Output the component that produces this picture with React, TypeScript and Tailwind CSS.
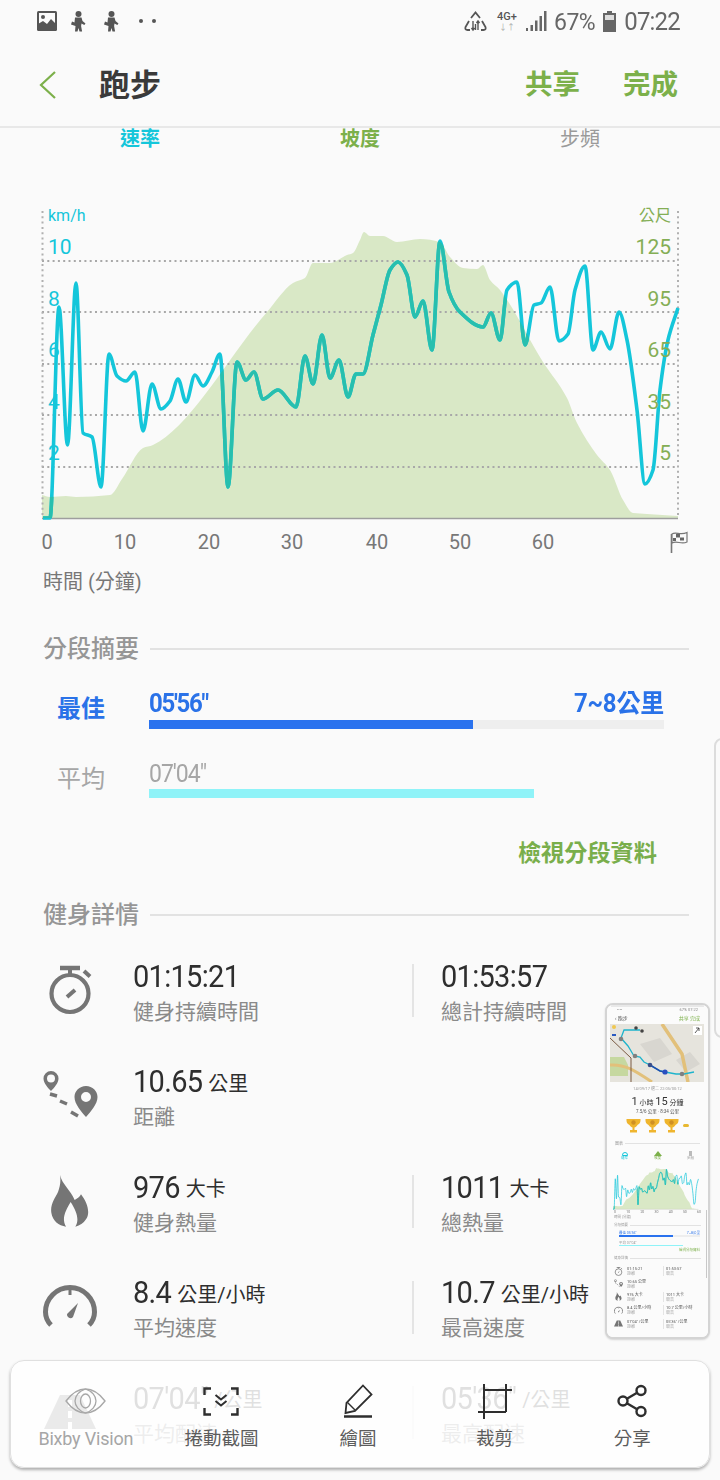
import React from "react";
import { Share2 } from "lucide-react";

type P = [number, number];

const speed: P[] = [[43,518],[50,518],[59,307],[67.5,445],[76,283],[83,433],[92,437],[101,487],[109,354],[117,376],[126,381],[135,372],[143,431],[152,384],[161,409],[170,401],[178,379],[186,402],[195,375],[203,386],[212,372],[220,354],[228,487],[237,362],[246,380],[254,372],[263,399],[278,390],[296,407],[305,356],[313,384],[322,335],[330,378],[339,360],[348,397],[356,374],[363,374],[373,335],[381,305],[390,270],[398,262],[407,275],[415,317],[423,301],[432,350],[440,241],[449,292],[460,312],[483,327],[491,313],[500,340],[507,290],[517,282],[525,345],[534,305],[541,303],[550,287],[559,341],[568,334],[575,290],[585,266],[593,350],[601,332],[610,349],[619,312],[627,340],[637,410],[645,484],[653,470],[660,390],[668,340],[678,308]];

const elevTop: P[] = [[42,495],[50,497],[66,496],[76,497],[110,495],[122,479],[143,448],[153,445],[267,312],[293,283],[305,278],[313,263],[330,263],[347,255],[353,253],[360,240],[364,232],[370,236],[383,236],[397,242],[420,239],[440,242],[450,257],[463,268],[477,269],[483,265],[490,280],[500,290],[543,362],[567,398],[577,423],[597,455],[610,470],[623,500],[633,513],[647,514],[678,516]];

function mono(pts: P[]) {
  const n = pts.length;
  const s: number[] = [];
  for (let i = 0; i < n - 1; i++) s.push((pts[i + 1][1] - pts[i][1]) / (pts[i + 1][0] - pts[i][0]));
  const m: number[] = [s[0]];
  for (let i = 1; i < n - 1; i++) {
    if (s[i - 1] * s[i] <= 0) m.push(0);
    else m.push((2 * s[i - 1] * s[i]) / (s[i - 1] + s[i]));
  }
  m.push(s[n - 2]);
  let d = `M${pts[0][0]} ${pts[0][1]}`;
  for (let i = 0; i < n - 1; i++) {
    const h = (pts[i + 1][0] - pts[i][0]) / 3;
    d += `C${pts[i][0] + h} ${pts[i][1] + m[i] * h} ${pts[i + 1][0] - h} ${pts[i + 1][1] - m[i + 1] * h} ${pts[i + 1][0]} ${pts[i + 1][1]}`;
  }
  return d;
}
const elevPath = mono(elevTop) + "L678 518L42 518Z";
const speedPath = mono(speed);

function Plot({ id, sw = 3.6, grid = true }: { id: string; sw?: number; grid?: boolean }) {
  return (
    <>
      <clipPath id={id}>
        <path d={elevPath} />
      </clipPath>
      <path d={elevPath} fill="#d9e8c6" />
      {grid &&
        [261, 312, 364, 415, 467].map((y) => (
          <line key={y} x1="42" x2="678" y1={y} y2={y} stroke="#a8a8a8" strokeWidth="2" strokeDasharray="2 3.3" />
        ))}
      {grid && <line x1="42.5" x2="42.5" y1="211" y2="518" stroke="#b0b0b0" strokeWidth="2" strokeDasharray="2 3.3" />}
      {grid && <line x1="678" x2="678" y1="211" y2="518" stroke="#b0b0b0" strokeWidth="2" strokeDasharray="2 3.3" />}
      <line x1="42" x2="678" y1="518.5" y2="518.5" stroke="#9e9e9e" strokeWidth="1.5" />
      <path d={speedPath} fill="none" stroke="#14c6da" strokeWidth={sw} strokeLinejoin="round" />
      <path d={speedPath} fill="none" stroke="#28bfae" strokeWidth={sw} strokeLinejoin="round" clipPath={`url(#${id})`} />
    </>
  );
}

function Figure() {
  return (
    <svg width="16" height="21" viewBox="0 0 16 21" fill="#555">
      <circle cx="8.500" cy="3" r="3" />
      <path d="M5 6.500h6.500l1 3.500 3 2.500-1.200 1.500-2.800-1.500-.4 2.500 1 5.500H9.500l-1-3.500-1 3.500H5l.5-5.500L1 13.500l1-3 2.500 1z" />
    </svg>
  );
}

function StatusBar() {
  return (
    <div className="h-[42px] flex items-center justify-between pl-[37px] pr-[40px] text-[#666]">
      <div className="flex items-center">
        <svg width="20" height="20" viewBox="0 0 20 20" className="mr-[13px]">
          <rect width="20" height="20" rx="1.500" fill="#555" />
          <rect x="2" y="2" width="16" height="16" fill="#fafafa" />
          <circle cx="6" cy="6" r="2" fill="#555" />
          <path d="M1 20v-7l5-3 4 3 4-5 5 5v7z" fill="#555" />
        </svg>
        <Figure />
        <div className="w-[17px]" />
        <Figure />
        <div className="ml-[20px] flex gap-[9px]">
          <span className="w-[4px] h-[4px] rounded-full bg-[#555]" />
          <span className="w-[4px] h-[4px] rounded-full bg-[#555]" />
        </div>
      </div>
      <div className="flex items-center">
        <svg width="23" height="21" viewBox="0 0 23 21" fill="none" stroke="#555" strokeWidth="1.800">
          <path d="M7 7l4.500-5.500L16 7M5 10l-3.500 6q-.8 3 2 3H6M18 10l3.500 6q.8 3-2 3H17" />
          <path d="M9 10v9M7.500 17l1.500 2 1.500-2M14 19v-9M12.500 12l1.500-2 1.500 2M11.500 13v6" strokeWidth="1.400" />
        </svg>
        <div className="ml-[9px] w-[22px] flex flex-col items-center leading-none">
          <span className="text-[11px] leading-[12px] font-medium text-[#555]">4G+</span>
          <span className="text-[8px] leading-[8px] text-[#aaa] mt-[1px]">↓↑</span>
        </div>
        <svg width="21" height="20" viewBox="0 0 21 20" className="ml-[8px]" fill="#666">
          <path d="M0 20v-3h2v3zM4.500 20v-6H7v6zM9 20V9.500h2.500V20zM13.500 20V5H16v15zM18 20V0h2.500v20z" />
        </svg>
        <span className="ml-[7px] text-[23px] leading-none tracking-[-0.5px] inline-block scale-y-[1.08]">67%</span>
        <svg width="13" height="21" viewBox="0 0 13 21" className="ml-[8px]">
          <path d="M4 0h5v2h4v19H0V2h4z" fill="#666" />
          <rect x="2" y="4" width="9" height="5" fill="#ddd" />
        </svg>
        <span className="ml-[8px] text-[24px] leading-none tracking-[-0.8px] inline-block scale-y-[1.08]">07:22</span>
      </div>
    </div>
  );
}

function AppBar() {
  return (
    <div className="h-[86px] border-b-2 border-[#e8e8e8] flex items-center pl-[38px] pr-[42px] pt-[2px]">
      <svg width="20" height="30" viewBox="0 0 20 30" fill="none" stroke="#7cb04a" strokeWidth="2.200">
        <path d="M17 2L3 15l14 13" />
      </svg>
      <span className="ml-[41px] text-[31px] leading-none font-bold text-[#3a3a3a] flex-1">跑步</span>
      <span className="text-[27.500px] leading-none font-bold text-[#7cb04a]">共享</span>
      <span className="ml-[43px] text-[27.500px] leading-none font-bold text-[#7cb04a]">完成</span>
    </div>
  );
}

const leftLabels: [string, string][] = [["10", "top-[85px]"], ["8", "top-[137px]"], ["6", "top-[188px]"], ["4", "top-[240px]"], ["2", "top-[291px]"]];
const rightLabels: [string, string][] = [["125", "top-[85px]"], ["95", "top-[137px]"], ["65", "top-[188px]"], ["35", "top-[240px]"], ["5", "top-[291px]"]];
const xLabels: [string, string][] = [["0", "left-[27px]"], ["10", "left-[105px]"], ["20", "left-[189px]"], ["30", "left-[272px]"], ["40", "left-[357px]"], ["50", "left-[440px]"], ["60", "left-[523px]"]];

function Chart() {
  return (
    <div className="relative h-[450px]">
      <svg width="720" height="450" viewBox="0 150 720 450" className="absolute inset-0">
        <Plot id="clip-main" />
      </svg>
      <span className="absolute left-[48px] top-[55px] text-[16px] leading-[22px] text-[#14c6da]">km/h</span>
      <span className="absolute right-[49px] top-[55px] text-[16px] leading-[22px] text-[#84ae55]">公尺</span>
      {leftLabels.map(([t, c]) => (
        <span key={t} className={`absolute left-[48px] ${c} text-[21px] leading-[24px] text-[#14c6da]`}>{t}</span>
      ))}
      {rightLabels.map(([t, c]) => (
        <span key={t} className={`absolute right-[49px] ${c} text-[21px] leading-[24px] text-[#84ae55]`}>{t}</span>
      ))}
      {xLabels.map(([t, c]) => (
        <span key={t} className={`absolute ${c} w-[40px] text-center top-[380px] text-[20px] leading-[24px] text-[#777]`}>{t}</span>
      ))}
      <svg width="18" height="22" viewBox="0 0 18 22" className="absolute left-[670px] top-[381px]">
        <path d="M1.500 22V3" stroke="#777" strokeWidth="1.600" />
        <path d="M2 3C6 0 10 5 17 1.500V11C11 14 7 9 2 12z" fill="#fafafa" stroke="#777" strokeWidth="1.200" />
        <path d="M6 3h4v3.500H6zM10 6.500h4v3h-4zM3 7h3v3H3z" fill="#666" />
      </svg>
      <span className="absolute left-[43px] top-[419px] text-[20px] leading-[26px] text-[#777]">時間 (分鐘)</span>
    </div>
  );
}

function SectionHead({ title }: { title: string }) {
  return (
    <div className="h-[34px] pl-[43px] pr-[31px] flex items-center gap-[11px]">
      <span className="text-[24px] leading-none font-medium text-[#969696]">{title}</span>
      <div className="flex-1 h-[2px] bg-[#e2e2e2]" />
    </div>
  );
}

function Splits() {
  return (
    <div className="pr-[56px]">
      <div className="flex">
        <span className="w-[149px] pl-[57px] pt-[5px] text-[24px] leading-[28px] font-bold text-[#2a72e8]">最佳</span>
        <div className="flex-1">
          <div className="flex justify-between h-[28px] items-center text-[#2a72e8] font-bold text-[24px] leading-none">
            <span className="tracking-[-1.300px] inline-block scale-y-[1.05]">05'56"</span>
            <span className="tracking-[-0.200px] inline-block scale-y-[1.05]">7~8公里</span>
          </div>
          <div className="mt-[2px] h-[9px] bg-[#eeeeee]">
            <div className="h-full w-[324px] bg-[#2a72ee]" />
          </div>
        </div>
      </div>
      <div className="flex mt-[30px]">
        <span className="w-[149px] pl-[57px] pt-[6px] text-[24px] leading-[28px] text-[#a6a6a6]">平均</span>
        <div className="flex-1">
          <div className="h-[28px] flex items-center text-[#a6a6a6] text-[23px] leading-none tracking-[-1px]"><span className="inline-block scale-y-[1.1]">07'04"</span></div>
          <div className="mt-[2px] h-[9px] w-[385px] bg-[#8ff3f8]" />
        </div>
      </div>
    </div>
  );
}

const StopwatchIcon = () => (
  <svg width="46" height="50" viewBox="0 0 46 50" fill="none" stroke="#757575">
    <circle cx="23" cy="28.500" r="18.500" strokeWidth="4.200" />
    <path d="M13 3h20" strokeWidth="4.500" />
    <path d="M23 3v6" strokeWidth="4" />
    <path d="M37 6l6 5.500" strokeWidth="4" />
    <path d="M20 32l8-7" strokeWidth="4" />
  </svg>
);
const PinIcon = () => (
  <svg width="56" height="50" viewBox="0 0 56 50">
    <path fillRule="evenodd" d="M9 0a7.500 7.500 0 0 1 7.500 7.500C16.500 12 12 17 9 20 6 17 1.500 12 1.500 7.500A7.500 7.500 0 0 1 9 0zm0 3.500a4 4 0 1 0 0 8 4 4 0 0 0 0-8z" fill="#757575" />
    <path fillRule="evenodd" d="M44 15c6.500 0 11.500 5 11.500 11 0 7-7 15-11.500 20-4.500-5-11.500-13-11.500-20 0-6 5-11 11.500-11zm0 6a5 5 0 1 0 0 10 5 5 0 0 0 0-10z" fill="#757575" />
    <path d="M8 23l7 2M18 30l7 3M29 41l7 4" stroke="#757575" strokeWidth="3.500" fill="none" />
  </svg>
);
const FlameIcon = () => (
  <svg width="40" height="54" viewBox="150 675 120 160">
    <path fillRule="evenodd" fill="#757575" d="M180 677C186 705 212 722 224 752C232 748 240 742 243 735C262 760 272 790 258 810C250 822 240 828 226 832C238 812 232 790 212 758C196 785 184 808 198 832C176 828 158 815 154 790C150 765 166 745 174 728C180 712 183 695 180 677Z" />
  </svg>
);
const GaugeIcon = () => (
  <svg width="54" height="44" viewBox="0 0 54 44" fill="none" stroke="#757575">
    <path d="M8 40C3 35 2.500 30 2.500 27a24.500 24.500 0 0 1 49 0c0 3-.5 8-5.500 13" strokeWidth="5" />
    <path d="M27 5v5" strokeWidth="3" />
    <path d="M24 29l11-11-5 14a3.500 3.500 0 0 1-6-3z" fill="#757575" stroke="none" />
  </svg>
);
const RoadIcon = () => (
  <svg width="52" height="34" viewBox="0 0 52 34">
    <path d="M16 0h20l16 34H0z" fill="#757575" />
    <path d="M24 5h4v7h-4zM24 16h4v7h-4zM24 27h4v7h-4z" fill="#fff" />
  </svg>
);

type Cell = { n: string; u?: string; l: string };
const rows: { icon: React.ReactNode; a: Cell; b?: Cell }[] = [
  { icon: <StopwatchIcon />, a: { n: "01:15:21", l: "健身持續時間" }, b: { n: "01:53:57", l: "總計持續時間" } },
  { icon: <PinIcon />, a: { n: "10.65", u: "公里", l: "距離" } },
  { icon: <FlameIcon />, a: { n: "976", u: "大卡", l: "健身熱量" }, b: { n: "1011", u: "大卡", l: "總熱量" } },
  { icon: <GaugeIcon />, a: { n: "8.4", u: "公里/小時", l: "平均速度" }, b: { n: "10.7", u: "公里/小時", l: "最高速度" } },
  { icon: <RoadIcon />, a: { n: "07'04\"", u: "/公里", l: "平均配速" }, b: { n: "05'36\"", u: "/公里", l: "最高配速" } },
];

function StatCell({ c }: { c: Cell }) {
  return (
    <div>
      <div className="h-[36px] flex items-center text-[#2e2e2e]">
        <span className="text-[29px] leading-none tracking-[-0.7px] inline-block scale-y-[1.08]">{c.n}</span>
        {c.u && <span className="ml-[6px] mt-[4px] text-[20px] leading-none">{c.u}</span>}
      </div>
      <div className="mt-[4px] h-[28px] flex items-center text-[21px] leading-none text-[#8a8a8a]">{c.l}</div>
    </div>
  );
}

function Stats() {
  return (
    <div>
      {rows.map((r, i) => (
        <div key={i} className="h-[105.5px] flex">
          <div className="w-[133px] pl-[14px] pr-[7px] h-[64px] flex items-center justify-center">{r.icon}</div>
          <div className="w-[279px]"><StatCell c={r.a} /></div>
          {r.b && (
            <>
              <div className="w-[2px] h-[53px] mt-[6px] bg-[#e4e4e4]" />
              <div className="ml-[27px]"><StatCell c={r.b} /></div>
            </>
          )}
        </div>
      ))}
    </div>
  );
}

function EyeIcon() {
  return (
    <svg width="41" height="26" viewBox="0 0 41 26" fill="none" stroke="#a8a8a8" strokeWidth="1.300">
      <path d="M1 13C7 5 14 1 20.500 1S34 5 40 13c-6 8-13.500 12-19.500 12S7 21 1 13z" />
      <path d="M20.500 1C14 3 10 8 10 13s4 10 10.500 12" />
      <path d="M20.500 1C27 3 31 8 31 13s-4 10-10.500 12" />
      <ellipse cx="20.500" cy="13" rx="5" ry="7" />
    </svg>
  );
}

function ScrollIcon() {
  return (
    <svg width="36" height="29" viewBox="0 0 36 29" fill="none" stroke="#2e2e2e" strokeWidth="2.400">
      <path d="M8 1.500H1.500V8M28 1.500h6.500V8M8 27.500H1.500V21M28 27.500h6.500V21" />
      <path d="M12.500 8l5.500 4.500L23.500 8M12.500 14l5.500 4.500 5.500-4.500" strokeWidth="2" />
    </svg>
  );
}
function PenIcon() {
  return (
    <svg width="30" height="34" viewBox="0 0 30 34" fill="none" stroke="#2e2e2e" strokeWidth="1.800">
      <path d="M20 1.500l8.500 9L12 27l-9.500 2 1-10z" />
      <path d="M4.500 18.500L12 26" strokeWidth="1.400" />
      <path d="M1 32.500h28" strokeWidth="2.500" />
    </svg>
  );
}
function CropIcon() {
  return (
    <svg width="34" height="35" viewBox="0 0 34 35" fill="none" stroke="#2e2e2e" strokeWidth="2">
      <path d="M6 6h22v22M6 0v28h22M0 28h6M28 0v6h6M6 28v7" />
    </svg>
  );
}

function ToolItem({ icon, label, cls, dim }: { icon: React.ReactNode; label: string; cls: string; dim?: boolean }) {
  return (
    <div className={`flex flex-col items-center ${cls}`}>
      <div className="h-[38px] flex items-center justify-center">{icon}</div>
      <span className={`mt-[6px] h-[26px] whitespace-nowrap leading-[26px] ${dim ? "text-[18px] tracking-[-0.200px] text-[#a6a6a6]" : "text-[18.500px] text-[#5c5c5c]"}`}>{label}</span>
    </div>
  );
}

function Toolbar() {
  return (
    <div className="absolute left-[10px] top-[1360px] w-[700px] h-[108px] rounded-[14px] bg-white/85 border border-[#e0e0e0] shadow-[0_2px_3px_rgba(0,0,0,0.3)] pt-[21px]">
      <div className="flex">
        <ToolItem cls="w-[150px]" icon={<EyeIcon />} label="Bixby Vision" dim />
        <ToolItem cls="w-[122px]" icon={<ScrollIcon />} label="捲動截圖" />
        <ToolItem cls="w-[152px]" icon={<PenIcon />} label="繪圖" />
        <ToolItem cls="w-[122px]" icon={<CropIcon />} label="裁剪" />
        <ToolItem cls="w-[154px]" icon={<Share2 size={36} strokeWidth={1.600} color="#2e2e2e" />} label="分享" />
      </div>
    </div>
  );
}

function MapMini() {
  return (
    <svg width="94" height="58" viewBox="0 0 94 58" className="block">
      <rect width="94" height="58" fill="#e6e4dd" />
      <path d="M30 20L50 14 62 30 44 38zM66 36l14-8 10 12-14 8z" fill="#d8d6d0" />
      <path d="M0 33h14l4 8v11H0z" fill="#c6d8a0" />
      <path d="M52 0L72 30 78 58" fill="none" stroke="#e2c07a" strokeWidth="3.500" />
      <path d="M0 41C15 40 24 46 42 58" fill="none" stroke="#e2c07a" strokeWidth="3" />
      <path d="M0 14L21 34V58" fill="none" stroke="#7a5a42" strokeWidth="1" />
      <path d="M30 6H14L11 14L18 22 24 32 30 33 34 38 40 41 50 47 55 48 66 50 74 50 84 48" fill="none" stroke="#1eb4cc" strokeWidth="1.300" />
      <path d="M40 41L50 47 55 48" fill="none" stroke="#1d4fae" strokeWidth="1.500" />
      <circle cx="11" cy="15" r="2.300" fill="#808080" />
      <circle cx="25" cy="32" r="2.300" fill="#808080" />
      <circle cx="40" cy="41" r="2.300" fill="#3a4f8a" />
      <circle cx="55" cy="48" r="2.600" fill="#2a4fc0" />
      <circle cx="72" cy="50" r="2.300" fill="#808080" />
      <circle cx="26" cy="4" r="1.800" fill="#444" />
      <circle cx="32" cy="7" r="1.800" fill="#444" />
      <circle cx="4" cy="3" r="2" fill="#f0c850" />
      <rect x="2" y="10" width="4" height="2" fill="#2a5ac0" />
      <rect x="83" y="2" width="9" height="9" fill="#fff" />
      <path d="M85 9l4-5M86 4h3v3" stroke="#333" strokeWidth=".8" fill="none" />
    </svg>
  );
}

function Trophy() {
  return (
    <svg width="15" height="15" viewBox="0 0 15 15">
      <path d="M0.500 1h14c.3 4-1.500 5-3 6-1 1.500-2 2.300-3 2.500V12H11v2.500H4V12h2.500V9.500c-1-.2-2-1-3-2.500-1.500-1-3.300-2-3-6z" fill="#efb52e" />
      <circle cx="7.500" cy="4.500" r="2.200" fill="#cf9024" />
    </svg>
  );
}

function MiniRow({ icon, a, b, h }: { icon: React.ReactNode; a: string; b?: string; h: string }) {
  return (
    <div className={`flex ${h} items-center`}>
      <div className="w-[17px] flex justify-center"><div className="w-[9px] h-[9px] flex items-center justify-center [&>svg]:w-full [&>svg]:h-full">{icon}</div></div>
      <div className="w-[36px] text-[4px] leading-[5px] text-[#555]">{a}<br /><span className="text-[#aaa]">距離</span></div>
      {b && <div className="text-[4px] leading-[5px] text-[#555] border-l border-[#e4e4e4] pl-[2px]">{b}<br /><span className="text-[#aaa]">最高</span></div>}
    </div>
  );
}

function Thumbnail() {
  return (
    <div className="absolute left-[605px] top-[1003px] w-[105px] h-[336px] rounded-[8px] border-2 border-[#d4d4d4] bg-white overflow-hidden shadow-[0_1px_2px_rgba(0,0,0,0.15)]">
      <div className="relative h-full bg-[#fbfbfb] text-center blur-[0.3px]">
        <div className="h-[8px] flex items-center justify-between px-[6px] text-[4px] text-[#888] border-t-2 border-[#e8e8e8] mx-[4px]"><span>••••</span><span>67% 07:22</span></div>
        <div className="h-[10px] flex items-center justify-between px-[8px] text-[5px] leading-none text-[#555]">
          <span>‹ 跑步</span>
          <span className="text-[#7cb04a]">共享 完成</span>
        </div>
        <div className="mx-[3px] mt-[1px]"><MapMini /></div>
        <div className="mt-[4px] text-[4px] leading-[5px] text-[#999]">14/09/17 週二 22:05/00:12</div>
        <div className="mt-[5px] text-[#333] text-[7px] leading-[12px]"><span className="text-[11px]">1</span> 小時 <span className="text-[11px]">15</span> 分鐘</div>
        <div className="text-[4.500px] leading-[6px] text-[#555]">7.5/6 公里 · 8:34 公里</div>
        <div className="mt-[3px] flex items-center justify-center gap-[4px] pr-[1px]">
          <Trophy /><Trophy /><Trophy />
          <span className="w-[6px] h-[3px] rounded-full bg-[#e8b830]" />
        </div>
        <div className="mt-[8px] flex items-center gap-[2px] px-[8px]">
          <span className="text-[4px] leading-[5px] text-[#999]">圖表</span>
          <div className="flex-1 h-px bg-[#e2e2e2]" />
        </div>
        <div className="mt-[3px] px-[14px] flex justify-between items-center h-[14px]">
          <div className="flex flex-col items-center">
            <span className="w-[6px] h-[4px] rounded-t-full border border-[#14c6da]" />
            <span className="text-[3.500px] leading-[5px] text-[#14c6da]">速率</span>
          </div>
          <div className="flex flex-col items-center">
            <span className="w-0 h-0 border-x-[4px] border-x-transparent border-b-[5px] border-b-[#7cb04a]" />
            <span className="text-[3.500px] leading-[5px] text-[#7cb04a]">坡度</span>
          </div>
          <div className="flex flex-col items-center">
            <span className="w-[3px] h-[5px] bg-[#bbb]" />
            <span className="text-[3.500px] leading-[5px] text-[#999]">步頻</span>
          </div>
        </div>
        <svg width="86" height="46" viewBox="42 205 640 318" preserveAspectRatio="none" className="ml-[6px] mt-[1px] block">
          <Plot id="clip-mini" sw={5} grid={false} />
        </svg>
        <div className="flex justify-between px-[7px] text-[3.500px] leading-[4px] text-[#777]">
          <span>0</span><span>10</span><span>20</span><span>30</span><span>40</span><span>50</span><span>60</span>
        </div>
        <div className="text-left pl-[7px] text-[3.500px] leading-[6px] text-[#999]">時間 (分鐘)</div>
        <div className="mt-[2px] flex items-center gap-[2px] px-[7px]">
          <span className="text-[3.500px] leading-[6px] text-[#999]">分段摘要</span>
          <div className="flex-1 h-px bg-[#e2e2e2]" />
        </div>
        <div className="mt-[3px] pl-[12px] pr-[8px]">
          <div className="flex justify-between text-[3.500px] leading-[4px] text-[#2a72e8]"><span>最佳 05'56"</span><span>7~8公里</span></div>
          <div className="h-[1.500px] bg-[#eee]"><div className="h-full w-[54px] bg-[#2a72ee]" /></div>
          <div className="mt-[4px] text-left text-[3.500px] leading-[4px] text-[#999]">平均 07'04"</div>
          <div className="h-[1.500px] w-[64px] bg-[#8ff3f8]" />
        </div>
        <div className="mt-[2px] pr-[8px] text-right text-[3.500px] leading-[5px] text-[#7cb04a]">檢視分段資料</div>
        <div className="mt-[3px] flex items-center gap-[2px] px-[7px]">
          <span className="text-[3.500px] leading-[5px] text-[#999]">健身詳情</span>
          <div className="flex-1 h-px bg-[#e2e2e2]" />
        </div>
        <div className="text-left pl-[3px] pt-[4px]">
          <MiniRow h="h-[12px]" icon={<StopwatchIcon />} a="01:15:21" b="01:53:57" />
          <MiniRow h="h-[13px]" icon={<PinIcon />} a="10.65 公里" />
          <MiniRow h="h-[13px]" icon={<FlameIcon />} a="976 大卡" b="1011 大卡" />
          <MiniRow h="h-[14px]" icon={<GaugeIcon />} a="8.4 公里/小時" b="10.7 公里/小時" />
          <MiniRow h="h-[13px]" icon={<RoadIcon />} a="07'04'' /公里" b="05'36'' /公里" />
        </div>
        <div className="absolute right-[1px] top-[205px] w-[1px] h-[68px] bg-[#c8c8c8]" />
      </div>
    </div>
  );
}

export default function App() {
  return (
    <div className="relative w-[720px] h-[1480px] overflow-hidden bg-[#fafafa] font-['Roboto','Noto_Sans_CJK_TC',sans-serif]">
      <StatusBar />
      <AppBar />
      <div className="h-[22px] overflow-hidden pl-[30px] pr-[30px] grid grid-cols-3 text-center text-[20px] leading-[22px] font-bold">
        <span className="text-[#14c6da]">速率</span>
        <span className="text-[#7cb04a]">坡度</span>
        <span className="text-[#9a9a9a] font-normal">步頻</span>
      </div>
      <Chart />
      <div className="mt-[32px]"><SectionHead title="分段摘要" /></div>
      <div className="mt-[24px]"><Splits /></div>
      <div className="mt-[40px] h-[30px] pr-[63px] text-right text-[23.200px] leading-[30px] font-bold text-[#79ae4b]">檢視分段資料</div>
      <div className="mt-[30px]"><SectionHead title="健身詳情" /></div>
      <div className="mt-[26px]"><Stats /></div>
      <div className="absolute left-[714px] top-[738px] w-[30px] h-[300px] rounded-l-[8px] border-2 border-[#dcdcdc] bg-[#fafafa]" />
      <Thumbnail />
      <Toolbar />
    </div>
  );
}
